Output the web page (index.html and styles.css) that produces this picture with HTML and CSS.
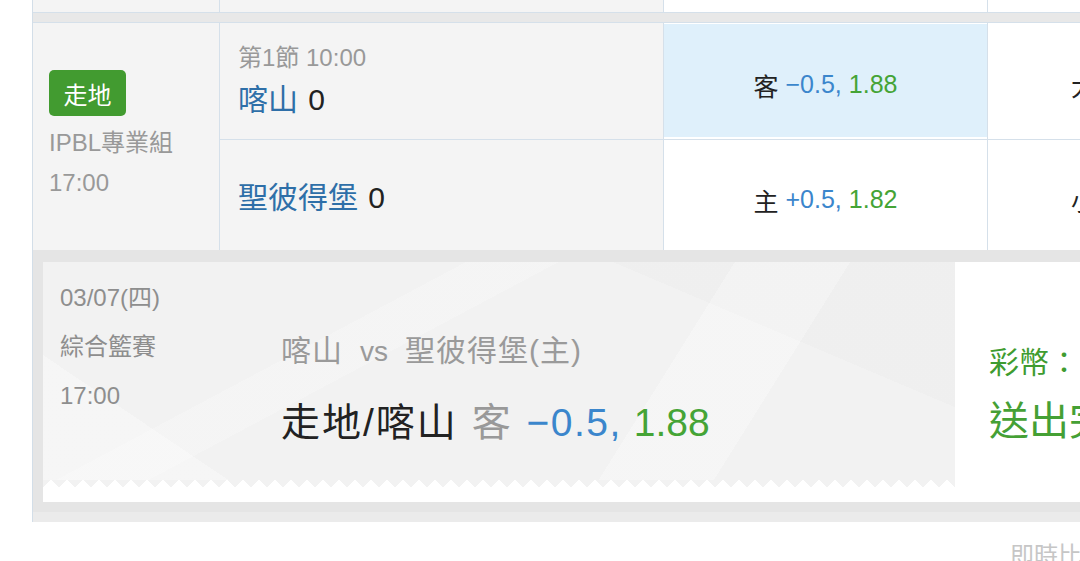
FILE: index.html
```html
<!DOCTYPE html>
<html lang="zh-Hant">
<head>
<meta charset="utf-8">
<title>走地</title>
<link rel="stylesheet" href="styles.css">
</head>
<body>
<div class="board">
  <div class="grid prev">
    <div class="cell gray"></div>
    <div class="cell gray"></div>
    <div class="cell white"></div>
    <div class="cell white"></div>
  </div>
  <div class="sep"></div>
  <div class="grid match">
    <div class="cell gray info">
      <div class="badge">走地</div>
      <div class="info-line">IPBL專業組</div>
      <div class="info-line">17:00</div>
    </div>
    <div class="cell gray teams">
      <div class="trow top">
        <div class="period">第1節 10:00</div>
        <div class="team">喀山 <span class="score">0</span></div>
      </div>
      <div class="trow bot">
        <div class="team">聖彼得堡 <span class="score">0</span></div>
      </div>
    </div>
    <div class="cell white odds">
      <div class="ocell top active"><span class="side-lbl">客</span>&nbsp;<span class="hdp">−0.5,</span>&nbsp;<span class="rate">1.88</span></div>
      <div class="ocell bot"><span class="side-lbl">主</span>&nbsp;<span class="hdp">+0.5,</span>&nbsp;<span class="rate">1.82</span></div>
    </div>
    <div class="cell white odds">
      <div class="ocell top"><span class="side-lbl">大</span>&nbsp;<span class="hdp">150.5,</span>&nbsp;<span class="rate">1.85</span></div>
      <div class="ocell bot"><span class="side-lbl">小</span>&nbsp;<span class="hdp">150.5,</span>&nbsp;<span class="rate">1.85</span></div>
    </div>
  </div>
  <div class="detail">
    <div class="ticket">
      <div class="ticket-main">
        <div class="paper">
          <div class="meta">
            <div class="meta-line">03/07(四)</div>
            <div class="meta-line">綜合籃賽</div>
            <div class="meta-line">17:00</div>
          </div>
          <div class="bet">
            <div class="vsline"><span class="vs-team">喀山</span><span class="vs">vs</span><span class="vs-team">聖彼得堡(主)</span></div>
            <div class="pick"><span class="pick-name">走地/喀山</span> <span class="pick-side">客</span> <span class="hdp pick-hdp">−0.5,</span> <span class="rate pick-rate">1.88</span></div>
          </div>
        </div>
        <div class="zig"></div>
      </div>
      <div class="ticket-side">
        <div class="coin">彩幣：</div>
        <div class="sent">送出完成</div>
      </div>
    </div>
  </div>
</div>
<div class="foot">即時比分</div>
</body>
</html>
```
FILE: styles.css
```css
html, body {
  margin: 0;
  padding: 0;
}
body {
  width: 1080px;
  height: 561px;
  overflow: hidden;
  background: #fff;
  font-family: "Liberation Sans", "Noto Sans CJK TC", sans-serif;
}

.board {
  margin-left: 32px;
  width: 1400px;
  border-left: 1px solid #d3dee8;
}

.grid {
  display: grid;
  grid-template-columns: 187px 444px 324px 324px;
}
.cell {
  box-sizing: border-box;
  border-right: 1px solid #d5e0ea;
}
.gray { background: #f4f4f4; }
.white { background: #fff; }

.prev { height: 12px; }

.sep {
  height: 9px;
  background: #e8e8e8;
  border-top: 1px solid #d5e0ea;
  border-bottom: 1px solid #d5e0ea;
}

.match { height: 227px; }

.info {
  display: flex;
  flex-direction: column;
  justify-content: center;
  align-items: flex-start;
  padding-left: 16px;
}
.badge {
  width: 77px;
  height: 46px;
  border-radius: 5px;
  background: #429b30;
  color: #fff;
  font-size: 24px;
  display: flex;
  align-items: center;
  justify-content: center;
  margin-bottom: 7px;
}
.info-line {
  font-size: 24px;
  line-height: 40px;
  color: #999;
  white-space: nowrap;
}

.teams {
  display: flex;
  flex-direction: column;
}
.trow {
  display: flex;
  flex-direction: column;
  justify-content: center;
  padding-left: 18px;
  box-sizing: border-box;
}
.trow.top {
  height: 117px;
  border-bottom: 1px solid #d5e0ea;
}
.trow.bot {
  flex: 1;
  padding-top: 5px;
}
.period {
  font-size: 24px;
  line-height: 34px;
  color: #999;
}
.team {
  font-size: 30px;
  line-height: 42px;
  margin-top: 4px;
  color: #2e6fa8;
  white-space: nowrap;
}
.trow.bot .team { margin-top: 0; }
.score {
  color: #222;
  margin-left: 2px;
}

.odds {
  display: flex;
  flex-direction: column;
}
.ocell {
  box-sizing: border-box;
  display: flex;
  align-items: center;
  justify-content: center;
  font-size: 25px;
  padding-top: 7px;
  white-space: nowrap;
}
.ocell.top {
  height: 117px;
  border-bottom: 1px solid #d5e0ea;
}
.ocell.bot {
  flex: 1;
  padding-top: 9px;
}
.ocell.active {
  background: #dff0fb;
  box-shadow: inset 0 1px 0 #fff, inset 0 -2px 0 #fff;
}
.side-lbl { color: #222; }
.hdp { color: #3b86cc; }
.rate { color: #45a436; }

.detail {
  background: #e5e5e5;
  padding: 12px 0 10px 10px;
  border-bottom: 10px solid #ebebeb;
}
.ticket {
  display: flex;
  height: 240px;
  background: #fff;
}
.ticket-main {
  width: 912px;
  display: flex;
  flex-direction: column;
}
.paper {
  height: 218px;
  display: flex;
  background:
    linear-gradient(122deg, transparent 0 66%, rgba(255,255,255,.28) 66% 77%, transparent 77%),
    linear-gradient(34deg, rgba(255,255,255,.3) 0 15%, transparent 15%),
    linear-gradient(152deg, transparent 0 32%, rgba(255,255,255,.2) 32% 39%, transparent 39%),
    linear-gradient(203deg, rgba(0,0,0,.012) 0 24%, transparent 24%),
    #f2f2f2;
}
.zig {
  height: 7px;
  background:
    conic-gradient(from 131deg at 50% 0, #fff 98deg, transparent 0) 0 0 / 16px 7px repeat-x,
    #f2f2f2;
}

.meta {
  width: 221px;
  padding: 11px 0 0 17px;
}
.meta-line {
  font-size: 24px;
  line-height: 49px;
  color: #8e8e8e;
  white-space: nowrap;
}

.bet {
  padding-top: 67px;
  white-space: nowrap;
}
.vsline {
  font-size: 30px;
  line-height: 44px;
  color: #9a9a9a;
}
.vs-team { letter-spacing: 1px; }
.vs {
  margin: 0 17px;
  font-size: 28px;
}
.pick {
  font-size: 39px;
  line-height: 52px;
  margin-top: 23px;
}
.pick-name {
  color: #222;
  letter-spacing: 2px;
}
.pick-side {
  color: #999;
  margin-left: 3px;
}
.pick-hdp {
  margin-left: 5px;
  letter-spacing: 1.5px;
}
.pick-rate { margin-left: 1px; }

.ticket-side {
  flex: 1;
  padding: 81px 0 0 34px;
  white-space: nowrap;
}
.coin {
  font-size: 30px;
  line-height: 40px;
  color: #3f9c30;
}
.sent {
  font-size: 40px;
  line-height: 50px;
  margin-top: 13px;
  color: #45a035;
}

.foot {
  padding-left: 1010px;
  margin-top: 17px;
  font-size: 24px;
  line-height: 34px;
  color: #c6c6c6;
  white-space: nowrap;
}
```
